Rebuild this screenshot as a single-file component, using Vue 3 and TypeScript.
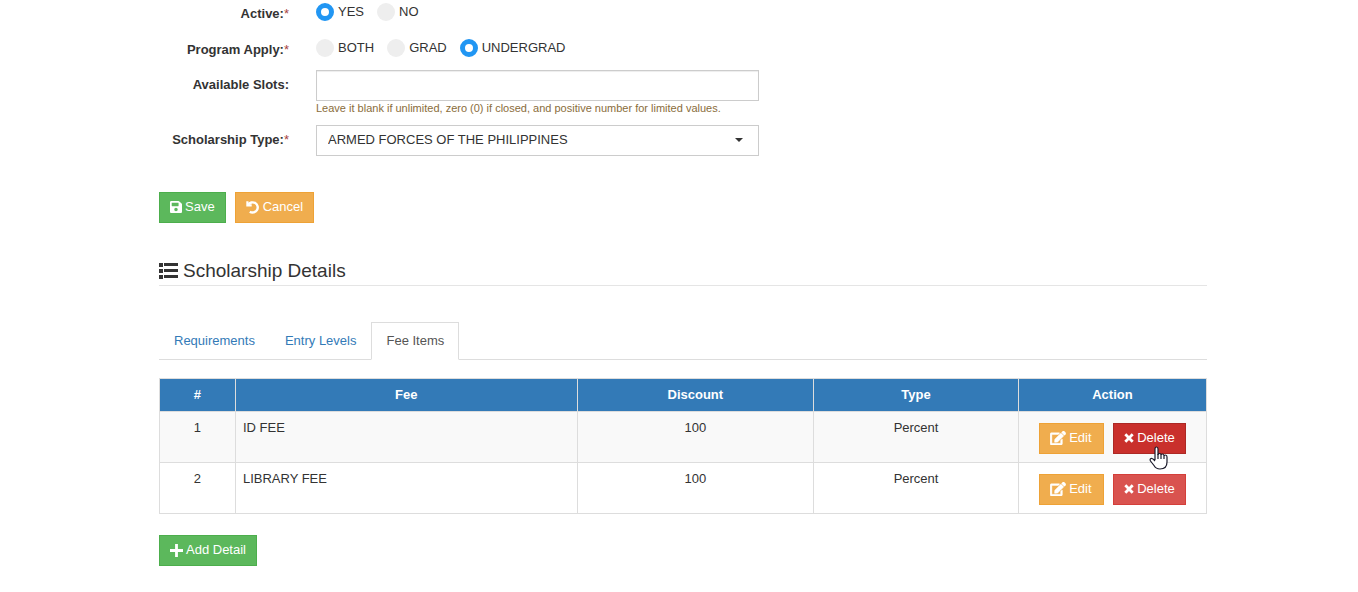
<script setup lang="ts">
import { ref } from 'vue'

interface FeeItem {
  id: number
  fee: string
  discount: number
  type: string
}

const active = ref('YES')
const program = ref('UNDERGRAD')
const slots = ref('')
const scholarshipType = ref('ARMED FORCES OF THE PHILIPPINES')
const activeTab = ref('Fee Items')

const activeOptions: string[] = ['YES', 'NO']
const programOptions: string[] = ['BOTH', 'GRAD', 'UNDERGRAD']
const tabs: string[] = ['Requirements', 'Entry Levels', 'Fee Items']

const items: FeeItem[] = [
  { id: 1, fee: 'ID FEE', discount: 100, type: 'Percent' },
  { id: 2, fee: 'LIBRARY FEE', discount: 100, type: 'Percent' },
]
</script>

<template>
  <main class="page">
    <form @submit.prevent>
      <div class="row" role="radiogroup" aria-labelledby="active-label">
        <span id="active-label" class="label">Active:<i class="required">*</i></span>
        <div class="choices">
          <label v-for="option in activeOptions" :key="option" class="choice">
            <input v-model="active" type="radio" name="active" :value="option" />
            <span>{{ option }}</span>
          </label>
        </div>
      </div>
      <div class="row" role="radiogroup" aria-labelledby="program-label">
        <span id="program-label" class="label">Program Apply:<i class="required">*</i></span>
        <div class="choices">
          <label v-for="option in programOptions" :key="option" class="choice">
            <input v-model="program" type="radio" name="program" :value="option" />
            <span>{{ option }}</span>
          </label>
        </div>
      </div>
      <div class="row field-row">
        <label class="label" for="slots">Available Slots:</label>
        <div class="field">
          <input id="slots" v-model="slots" class="control" type="text" aria-describedby="slots-hint" />
          <p id="slots-hint" class="hint">Leave it blank if unlimited, zero (0) if closed, and positive number for limited values.</p>
        </div>
      </div>
      <div class="row field-row">
        <label class="label" for="type">Scholarship Type:<i class="required">*</i></label>
        <div class="field">
          <select id="type" v-model="scholarshipType" class="control select">
            <option>ARMED FORCES OF THE PHILIPPINES</option>
          </select>
          <svg class="caret" viewBox="0 0 8 4" aria-hidden="true"><path d="M0 0h8L4 4z" /></svg>
        </div>
      </div>
      <div class="actions">
        <button type="submit" class="btn success">
          <svg class="icon save" viewBox="0 32 448 448" aria-hidden="true"><path d="M433.941 129.941l-83.882-83.882A48 48 0 0 0 316.118 32H48C21.49 32 0 53.49 0 80v352c0 26.51 21.49 48 48 48h352c26.51 0 48-21.49 48-48V163.882a48 48 0 0 0-14.059-33.941zM224 416c-35.346 0-64-28.654-64-64s28.654-64 64-64 64 28.654 64 64-28.654 64-64 64zm96-304.52V212c0 6.627-5.373 12-12 12H76c-6.627 0-12-5.373-12-12V108c0-6.627 5.373-12 12-12h228.52c3.183 0 6.235 1.264 8.485 3.515l3.48 3.48A11.996 11.996 0 0 1 320 111.48z" /></svg>
          Save
        </button>
        <button type="button" class="btn warning">
          <svg class="icon undo" viewBox="0 0 14 13" aria-hidden="true"><path d="M0.300 0.300h2.200v3h3.200v2.300H0.300z" /><path d="M2.200 3.900A5.100 5.100 0 1 1 3.800 10.700" fill="none" stroke="currentColor" stroke-width="2.400" /></svg>
          Cancel
        </button>
      </div>
    </form>

    <h2 class="heading">
      <svg class="list" viewBox="0 0 19 16" aria-hidden="true"><path d="M0 0h4v4H0zM0 6h4v4H0zM0 12h4v4H0zM5 0h14v3H5zM5 6h14v3H5zM5 12h14v3H5z" /></svg>
      Scholarship Details
    </h2>

    <nav class="tabs" aria-label="Scholarship details">
      <a v-for="tab in tabs" :key="tab" href="#" class="tab" :class="{ current: tab === activeTab }" @click.prevent="activeTab = tab">{{ tab }}</a>
    </nav>

    <table class="table">
      <colgroup>
        <col class="c-num" /><col class="c-fee" /><col class="c-discount" /><col class="c-type" /><col class="c-action" />
      </colgroup>
      <thead>
        <tr><th>#</th><th>Fee</th><th>Discount</th><th>Type</th><th>Action</th></tr>
      </thead>
      <tbody>
        <tr v-for="item in items" :key="item.id">
          <td>{{ item.id }}</td>
          <td class="left">{{ item.fee }}</td>
          <td>{{ item.discount }}</td>
          <td>{{ item.type }}</td>
          <td class="action-cell">
            <div class="cell-actions">
              <button type="button" class="btn warning">
                <svg class="icon edit" viewBox="0 0 576 512" aria-hidden="true"><path d="M402.6 83.2l90.2 90.2c3.8 3.8 3.8 10 0 13.8L274.4 405.6l-92.8 10.3c-12.4 1.4-22.9-9.1-21.5-21.5l10.3-92.8L388.8 83.2c3.8-3.8 10-3.8 13.8 0zm162-22.9l-48.8-48.8c-15.2-15.2-39.9-15.2-55.2 0l-35.4 35.4c-3.8 3.8-3.8 10 0 13.8l90.2 90.2c3.8 3.8 10 3.8 13.8 0l35.4-35.4c15.2-15.3 15.2-40 0-55.2zM384 346.2V448H64V128h229.8c3.2 0 6.2-1.3 8.5-3.5l40-40c7.6-7.6 2.2-20.5-8.5-20.5H48C21.5 64 0 85.5 0 112v352c0 26.5 21.5 48 48 48h352c26.5 0 48-21.5 48-48V306.2c0-10.7-12.9-16-20.5-8.5l-40 40c-2.2 2.3-3.5 5.3-3.5 8.5z" /></svg>
                Edit
              </button>
              <button type="button" class="btn danger" :class="{ hovered: item.id === 1 }">
                <svg class="icon times" viewBox="0 0 10 10" aria-hidden="true"><path d="M1.3 1.3l7.400 7.400M8.700 1.3l-7.400 7.400" fill="none" stroke="currentColor" stroke-width="2.800" /></svg>
                Delete
                <svg v-if="item.id === 1" class="pointer" viewBox="0 0 19 24" aria-hidden="true"><path d="M6 14V3Q6 1 7.500 1T9 3V9Q9 7.500 10.500 7.500T12 9Q12 8 13.500 8T15 10Q15 9 16.500 9T18 11V16Q18 23 11 23Q7 23 5 19.500L1.500 15Q.5 13 2 12.500T6 15" /><path d="M9 8v5M12 9v4M15 10v3" /></svg>
              </button>
            </div>
          </td>
        </tr>
      </tbody>
    </table>

    <button type="button" class="btn success">
      <svg class="icon plus" viewBox="0 0 12 12" aria-hidden="true"><path d="M4.700 0h2.600v4.700H12v2.600H7.300V12H4.700V7.300H0V4.700h4.700z" /></svg>
      Add Detail
    </button>
  </main>
</template>

<style>
body {
  margin: 0;
  background: #fff;
}
</style>

<style scoped>
.page {
  padding: 0 151px 26px 159px;
  font-family: "Liberation Sans", Arial, sans-serif;
  font-size: 13px;
  line-height: 18px;
  color: #333;
}
.row {
  display: grid;
  grid-template-columns: 130px minmax(0, 443px);
  column-gap: 27px;
  min-height: 36px;
}
.row.field-row {
  min-height: 31px;
  margin-top: -2px;
}
.field-row + .row.field-row {
  margin-top: 9px;
}
.label {
  padding-top: 5px;
  font-weight: 700;
  text-align: right;
}
.field-row .label {
  padding-top: 6px;
}
.required {
  font-style: normal;
  font-weight: 400;
  color: #a94442;
}
.choices {
  display: flex;
  gap: 13px;
  padding-top: 3px;
}
.choice {
  display: flex;
  gap: 4px;
  height: 18px;
}
.choice input {
  appearance: none;
  box-sizing: border-box;
  width: 18px;
  height: 18px;
  margin: 0;
  border: 0 solid #2196f3;
  border-radius: 50%;
  background: #eee;
}
.choice input:checked {
  border-width: 5px;
  background: #fff;
}
.field {
  position: relative;
}
.control {
  display: block;
  box-sizing: border-box;
  width: 100%;
  height: 31px;
  padding: 0 11px;
  border: 1px solid #ccc;
  border-radius: 0;
  background: #fff;
  box-shadow: inset 0 1px 1px rgba(0, 0, 0, 0.075);
  color: #333;
  font: inherit;
}
.select {
  appearance: none;
  padding-bottom: 2px;
  box-shadow: none;
}
.caret {
  position: absolute;
  top: 13px;
  right: 16px;
  width: 8px;
  height: 4px;
  fill: #333;
  pointer-events: none;
}
.hint {
  margin: 0;
  font-size: 11px;
  line-height: 15px;
  color: #8a6d3b;
}
.actions {
  display: flex;
  gap: 9px;
  margin-top: 36px;
}
.btn {
  position: relative;
  display: inline-flex;
  align-items: center;
  gap: 3px;
  box-sizing: border-box;
  height: 31px;
  padding: 0 10px 1px;
  border: 1px solid;
  border-radius: 0;
  color: #fff;
  font: inherit;
  line-height: 18px;
  white-space: nowrap;
}
.success {
  background: #5cb85c;
  border-color: #4cae4c;
}
.warning {
  background: #f0ad4e;
  border-color: #eea236;
}
.danger {
  background: #d9534f;
  border-color: #d43f3a;
}
.hovered {
  background: #c9302c;
  border-color: #ac2925;
}
.icon {
  flex: none;
  fill: currentColor;
}
.save {
  width: 12px;
  height: 12px;
}
.plus {
  width: 13px;
  height: 13px;
}
.undo {
  width: 14px;
  height: 13px;
}
.edit {
  width: 16px;
  height: 14px;
  stroke: currentColor;
  stroke-width: 16px;
}
.times {
  width: 10px;
  height: 10px;
}
.pointer {
  position: absolute;
  top: 22px;
  left: 35px;
  z-index: 1;
  width: 19px;
  height: 24px;
  fill: #fff;
  stroke: #1a1a2a;
  stroke-width: 1.2;
  pointer-events: none;
}
.heading {
  display: flex;
  align-items: center;
  gap: 5px;
  height: 28px;
  margin: 34px 0 36px;
  border-bottom: 1px solid #e5e5e5;
  font-size: 19px;
  font-weight: 400;
  line-height: 28px;
}
.list {
  width: 19px;
  height: 16px;
  fill: #333;
}
.tabs {
  display: flex;
  border-bottom: 1px solid #ddd;
}
.tab {
  padding: 9px 14px;
  margin-bottom: -1px;
  border: 1px solid transparent;
  color: #337ab7;
  text-decoration: none;
}
.tab.current {
  border-color: #ddd;
  border-bottom-color: #fff;
  background: #fff;
  color: #555;
}
.table {
  width: 100%;
  margin: 18px 0 21px;
  border-collapse: collapse;
  table-layout: fixed;
}
.c-num {
  width: 7.25%;
}
.c-fee {
  width: 32.63%;
}
.c-discount {
  width: 22.6%;
}
.c-type {
  width: 19.56%;
}
.c-action {
  width: 17.96%;
}
th,
td {
  padding: 7px;
  border: 1px solid #ddd;
  text-align: center;
  vertical-align: top;
}
th {
  background: #337ab7;
  color: #fff;
}
.left {
  text-align: left;
}
tbody tr:nth-child(odd) {
  background: #f9f9f9;
}
.action-cell {
  padding: 11px 7px 8px;
}
.cell-actions {
  display: flex;
  justify-content: center;
  gap: 9px;
}
.cell-actions .btn {
  min-width: 65px;
}
</style>
